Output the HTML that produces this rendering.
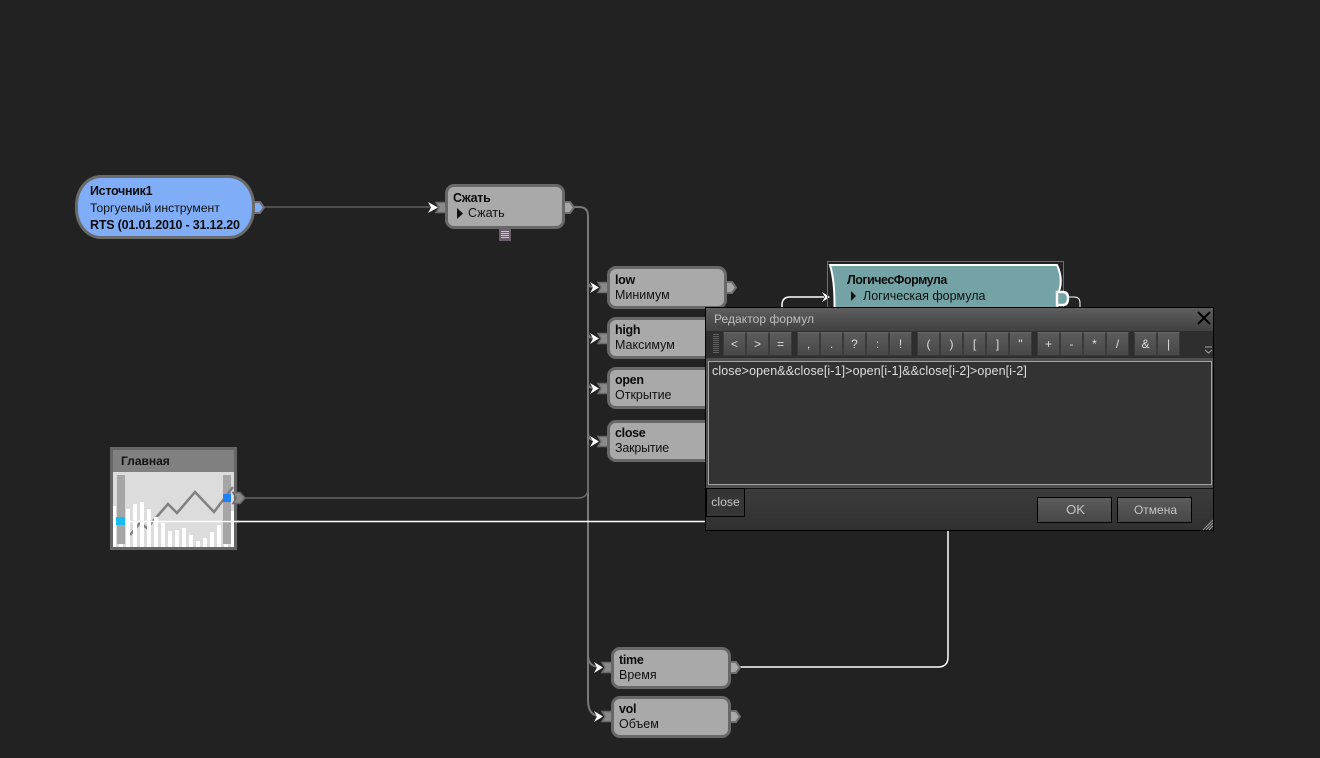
<!DOCTYPE html>
<html><head><meta charset="utf-8"><style>
html,body{margin:0;padding:0;background:#222222;}
#p{position:relative;width:1320px;height:758px;overflow:hidden;background:#222222;font-family:"Liberation Sans",sans-serif;font-size:12.5px;color:#111;}
.a{position:absolute;white-space:nowrap;}
.n{position:absolute;box-sizing:border-box;width:120px;height:42px;background:#a9a9a9;border:3px solid #686868;border-radius:9px;}
.t{position:absolute;left:5px;white-space:nowrap;line-height:14px;}
.b{font-weight:bold;color:#0c0c0c;letter-spacing:-.3px;}
.k{position:absolute;top:332px;width:23px;height:24px;box-sizing:border-box;background:linear-gradient(#5b5b5b,#484848);border:1px solid #3a3a3a;border-top-color:#666;color:#ddd;text-align:center;line-height:23px;font-size:12px;}
.btn{position:absolute;top:497px;width:75px;height:26px;box-sizing:border-box;border:1px solid #000;background:linear-gradient(#5c5c5c,#474747);color:#c4c4c4;text-align:center;line-height:24px;}
.w{position:absolute;background:#fff;width:4px;}
</style></head><body><div id="p">

<svg class="a" style="left:0;top:0" width="1320" height="758" fill="none">
<path d="M262 207H430" stroke="#5c5c5c" stroke-width="1.5"/>
<path d="M574 207H579Q588 207 588 216V700Q588 716 600 716" stroke="#777" stroke-width="2"/>
<path d="M240 498H578Q588 498 588 488V445" stroke="#666" stroke-width="1.5"/>
<path d="M588 282Q588 287 594 287M588 333Q588 338 594 338M588 383Q588 388 594 388M588 432Q588 440 594 440M588 655Q588 667 600 667" stroke="#777" stroke-width="2"/>
<path d="M125 521.500H706" stroke="#fff" stroke-width="1.500"/>
<path d="M738 667H938Q948 667 948 657V530" stroke="#fff" stroke-width="1.500"/>
<path d="M782 308V305Q782 297 790 297H824" stroke="#fff" stroke-width="1.500"/>
<path d="M1068 297H1074Q1080 297 1080 303V308" stroke="#fff" stroke-width="1"/>
<g fill="#8a8a8a" stroke="#6a6a6a" stroke-width="1.500">
<path d="M436 202.500H447V212.500H436L439 207.500Z"/>
<path d="M598 282.500H609V292.500H598L601 287.500Z"/>
<path d="M598 333.500H609V343.500H598L601 338.500Z"/>
<path d="M598 383.500H609V393.500H598L601 388.500Z"/>
<path d="M598 436.500H609V446.500H598L601 441.500Z"/>
<path d="M602 662.500H613V672.500H602L605 667.500Z"/>
<path d="M602 711.500H613V721.500H602L605 716.500Z"/>
</g>
<g fill="#a8a8a8" stroke="#6e6e6e" stroke-width="2">
<path d="M563 202H570L574 207.500L570 213H563Z"/>
<path d="M725 282H732L736 287.500L732 293H725Z"/>
<path d="M729 662H736L740 667.500L736 673H729Z"/>
<path d="M729 711H736L740 716.500L736 722H729Z"/>
<path d="M253 202H260L264 207.500L260 213H253Z" fill="#7fadf8"/>
</g>
<g fill="#fff">
<path d="M428 202L438 207.500L428 213L431 207.500Z"/>
<path d="M590 282L599 287.500L590 293L593 287.500Z"/>
<path d="M590 333L599 338.500L590 344L593 338.500Z"/>
<path d="M590 383L599 388.500L590 394L593 388.500Z"/>
<path d="M590 436L599 441.500L590 447L593 441.500Z"/>
<path d="M594 662L603 667.500L594 673L597 667.500Z"/>
<path d="M594 711L603 716.500L594 722L597 716.500Z"/>
<path d="M822 292L830 297L822 302L825 297Z"/>
</g>
</svg>

<!-- source -->
<div class="a" style="left:75px;top:175px;width:180px;height:64px;box-sizing:border-box;background:#7fadf8;border:3px solid #6a6a6a;border-radius:26px/30px;"></div>
<div class="a b" style="left:90px;top:184px;line-height:14px;">Источник1</div>
<div class="a" style="left:90px;top:201px;line-height:14px;font-size:12.2px;">Торгуемый инструмент</div>
<div class="a b" style="left:90px;top:218px;line-height:14px;letter-spacing:-.2px;">RTS (01.01.2010 - 31.12.20</div>

<!-- compress -->
<div class="n" style="left:445px;top:184px;height:45px;"><div class="t b" style="top:4px;">Сжать</div><div class="t" style="left:20px;top:19px;">Сжать</div>
<svg class="a" style="left:9px;top:21px" width="7" height="11"><path d="M0 0L6 5.500L0 11Z" fill="#111"/></svg></div>
<div class="a" style="left:499px;top:229px;width:12px;height:12px;background:#6b5f6b;"></div>
<div class="a" style="left:501px;top:231px;width:8px;height:8px;background:repeating-linear-gradient(#c8c8c8 0 1px,transparent 1px 2px);"></div>

<div class="n" style="left:607px;top:266px;height:43px;"><div class="t b" style="top:4px;">low</div><div class="t" style="top:19px;">Минимум</div></div>
<div class="n" style="left:607px;top:317px;"><div class="t b" style="top:3px;">high</div><div class="t" style="top:18px;">Максимум</div></div>
<div class="n" style="left:607px;top:367px;"><div class="t b" style="top:3px;">open</div><div class="t" style="top:18px;">Открытие</div></div>
<div class="n" style="left:607px;top:420px;"><div class="t b" style="top:3px;">close</div><div class="t" style="top:18px;letter-spacing:-.2px;">Закрытие</div></div>
<div class="n" style="left:611px;top:647px;"><div class="t b" style="top:3px;">time</div><div class="t" style="top:18px;">Время</div></div>
<div class="n" style="left:611px;top:696px;height:42px;"><div class="t b" style="top:3px;">vol</div><div class="t" style="top:18px;">Объем</div></div>

<!-- logic node -->
<svg class="a" style="left:826px;top:260px" width="245" height="50" fill="none">
<rect x="1.500" y="1.500" width="236" height="60" stroke="#2c7fb8"/>
<path d="M4 5H231Q238 20 232 34L231 60H8Q10 25 4 5Z" fill="#73a3a5" stroke="#fff" stroke-width="2"/>
<path d="M231 32H237Q242 32 242 38Q242 45 237 45H231Z" fill="#73a3a5" stroke="#fff" stroke-width="2.500"/>
</svg>
<div class="a b" style="left:847px;top:273px;line-height:14px;letter-spacing:-.5px;">ЛогичесФормула</div>
<div class="a" style="left:863px;top:289px;line-height:14px;">Логическая формула</div>
<svg class="a" style="left:851px;top:291px" width="6" height="10"><path d="M0 0L5 5L0 10Z" fill="#111"/></svg>

<!-- main -->
<div class="a" style="left:110px;top:447px;width:127px;height:103px;box-sizing:border-box;background:#dcdcdc;border:3px solid #666;"></div>
<div class="a" style="left:113px;top:450px;width:121px;height:22px;background:#808080;"></div>
<div class="a b" style="left:121px;top:454px;line-height:14px;font-size:12px;color:#111;letter-spacing:0;">Главная</div>
<div class="a" style="left:117px;top:475px;width:8px;height:69px;background:#a6a6a6;"></div>
<div class="a" style="left:223px;top:475px;width:8px;height:69px;background:#a6a6a6;"></div>
<svg class="a" style="left:114px;top:472px" width="120" height="75" fill="none"><path d="M16 63L26 51L33 56L54 32L63 41L81 20L100 40L119 15" stroke="#808080" stroke-width="2.500"/></svg>
<div class="w" style="left:113px;top:506px;height:41px;width:3px;"></div>
<div class="w" style="left:119px;top:544px;height:3px;"></div>
<div class="w" style="left:126px;top:509px;height:38px;"></div>
<div class="w" style="left:133px;top:504px;height:43px;"></div>
<div class="w" style="left:140px;top:502px;height:45px;"></div>
<div class="w" style="left:147px;top:509px;height:38px;"></div>
<div class="w" style="left:154px;top:517px;height:30px;"></div>
<div class="w" style="left:161px;top:523px;height:24px;"></div>
<div class="w" style="left:168px;top:531px;height:16px;"></div>
<div class="w" style="left:175px;top:530px;height:17px;"></div>
<div class="w" style="left:182px;top:528px;height:19px;"></div>
<div class="w" style="left:189px;top:535px;height:12px;"></div>
<div class="w" style="left:196px;top:541px;height:6px;"></div>
<div class="w" style="left:203px;top:538px;height:9px;"></div>
<div class="w" style="left:210px;top:532px;height:15px;"></div>
<div class="w" style="left:217px;top:525px;height:22px;"></div>
<div class="w" style="left:224px;top:544px;height:3px;"></div>
<div class="w" style="left:231px;top:511px;height:36px;width:3px;"></div>
<div class="a" style="left:223px;top:494px;width:8px;height:8px;background:#1e82ff;"></div>
<div class="a" style="left:116px;top:517px;width:9px;height:8px;background:#17bdf0;"></div>
<svg class="a" style="left:0;top:0" width="260" height="560" fill="none">
<path d="M125 521.500H240" stroke="#fff" stroke-width="1.500"/>
<path d="M233 492.500H240L245 498L240 503.500H233L236 498Z" fill="#8a8a8a" stroke="#6a6a6a" stroke-width="1.500"/>
</svg>

<!-- dialog -->
<div class="a" style="left:705px;top:307px;width:509px;height:224px;box-sizing:border-box;background:#3c3c3c;border:1px solid #000;"></div>
<div class="a" style="left:706px;top:308px;width:507px;height:23px;background:linear-gradient(#5e5e5e,#414141);"></div>
<div class="a" style="left:714px;top:312px;color:#bdbdbd;font-size:12px;letter-spacing:.05px;line-height:14px;">Редактор формул</div>
<svg class="a" style="left:1197px;top:311px" width="14" height="14"><path d="M1 1L13 13M13 1L1 13" stroke="#000" stroke-width="2"/></svg>
<div class="a" style="left:706px;top:331px;width:507px;height:27px;background:#2e2e2e;"></div>
<div class="a" style="left:713px;top:334px;width:6px;height:20px;background:repeating-linear-gradient(#777 0 1px,transparent 1px 2px);opacity:.7;"></div>
<div class="k" style="left:723px;">&lt;</div><div class="k" style="left:746px;">&gt;</div><div class="k" style="left:769px;">=</div>
<div class="k" style="left:797px;">,</div><div class="k" style="left:820px;">.</div><div class="k" style="left:843px;">?</div><div class="k" style="left:866px;">:</div><div class="k" style="left:889px;">!</div>
<div class="k" style="left:917px;">(</div><div class="k" style="left:940px;">)</div><div class="k" style="left:963px;">[</div><div class="k" style="left:986px;">]</div><div class="k" style="left:1009px;">"</div>
<div class="k" style="left:1037px;">+</div><div class="k" style="left:1060px;">-</div><div class="k" style="left:1083px;">*</div><div class="k" style="left:1106px;">/</div>
<div class="k" style="left:1134px;">&amp;</div><div class="k" style="left:1157px;">|</div>
<svg class="a" style="left:1204px;top:346px" width="9" height="9" fill="none"><path d="M1 1H8M1 4L4.500 7L8 4" stroke="#aaa"/></svg>
<div class="a" style="left:706px;top:358px;width:507px;height:130px;background:#505050;"></div>
<div class="a" style="left:708px;top:361px;width:504px;height:124px;box-sizing:border-box;background:#333;border:1px solid #a4a4a4;"></div>
<div class="a" style="left:712px;top:364px;color:#dedede;font-size:12.5px;letter-spacing:.1px;line-height:14px;">close&gt;open&amp;&amp;close[i-1]&gt;open[i-1]&amp;&amp;close[i-2]&gt;open[i-2]</div>
<div class="a" style="left:706px;top:488px;width:507px;height:42px;box-sizing:border-box;background:linear-gradient(#3c3c3c,#303030);border-top:1px solid #111;"></div>
<div class="a" style="left:706px;top:488px;width:39px;height:29px;box-sizing:border-box;background:#353535;border:1px solid #000;color:#c8c8c8;text-align:center;line-height:26px;font-size:12.2px;">close</div>
<div class="btn" style="left:1037px;font-size:13px;padding-left:2px;">OK</div>
<div class="btn" style="left:1117px;font-size:12px;padding-left:2px;">Отмена</div>
<svg class="a" style="left:1202px;top:519px" width="12" height="12"><path d="M11 1L1 11M11 4L4 11M11 7L7 11" stroke="#999"/></svg>
</div></body></html>
